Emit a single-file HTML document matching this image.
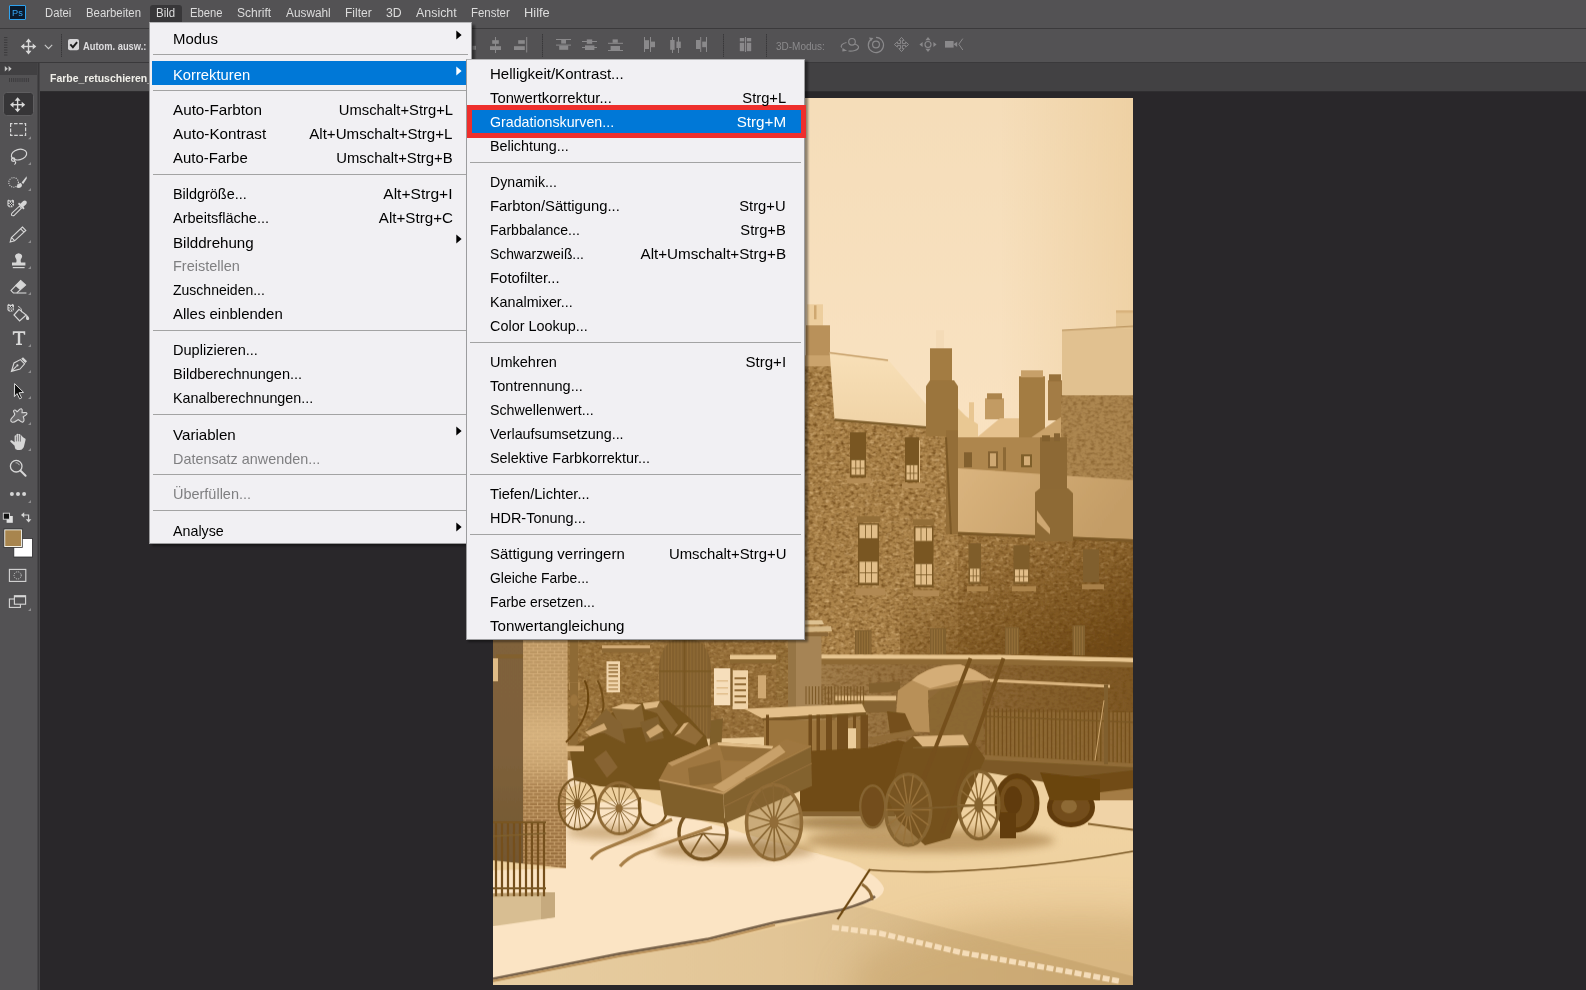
<!DOCTYPE html>
<html lang="de"><head><meta charset="utf-8"><title>Photoshop – Bild › Korrekturen › Gradationskurven</title>
<style>
html,body{margin:0;padding:0}
body{width:1586px;height:990px;position:relative;overflow:hidden;background:#29272a;font-family:"Liberation Sans",sans-serif;}
.abs{position:absolute}
.t{position:absolute;white-space:pre;line-height:24px;height:24px}
.sep{position:absolute;height:1px;background:#a3a3a3}
.menu{position:absolute;background:#f1f0f3;box-sizing:border-box}
</style></head>
<body>
<!-- canvas & photo -->
<svg class="abs" style="left:493px;top:97.7px" width="640" height="887" viewBox="493 97.7 640 887" preserveAspectRatio="none">
<defs>
<linearGradient id="sky" x1="0" y1="0" x2="0" y2="1"><stop offset="0" stop-color="#f5ddb9"/><stop offset="0.35" stop-color="#f9e2c1"/><stop offset="1" stop-color="#f4dbb6"/></linearGradient>
<linearGradient id="skyR" x1="0" y1="0" x2="1" y2="0"><stop offset="0" stop-color="#e9c792" stop-opacity="0"/><stop offset="1" stop-color="#e9c792" stop-opacity="0.55"/></linearGradient>
<linearGradient id="roof1" x1="0" y1="0" x2="0" y2="1"><stop offset="0" stop-color="rgb(248,224,184)"/><stop offset="1" stop-color="rgb(240,211,166)"/></linearGradient>
<linearGradient id="roof2" x1="0" y1="0" x2="1" y2="0.3"><stop offset="0" stop-color="#dab47e"/><stop offset="1" stop-color="#c49d66"/></linearGradient>
<linearGradient id="wdark" x1="0.2" y1="0.3" x2="0.8" y2="1"><stop offset="0" stop-color="rgb(100,62,12)" stop-opacity="0"/><stop offset="1" stop-color="rgb(100,62,12)" stop-opacity="0.8"/></linearGradient>
<linearGradient id="bwall" x1="0" y1="0" x2="1" y2="0"><stop offset="0" stop-color="rgb(162,126,76)"/><stop offset="0.5" stop-color="rgb(140,102,52)"/><stop offset="1" stop-color="rgb(126,88,36)"/></linearGradient>
<linearGradient id="door" x1="0" y1="0" x2="0" y2="1"><stop offset="0" stop-color="rgb(128,98,58)"/><stop offset="0.45" stop-color="rgb(126,97,59)"/><stop offset="1" stop-color="rgb(112,84,46)"/></linearGradient>
<linearGradient id="pillar" x1="0" y1="0" x2="0" y2="1"><stop offset="0" stop-color="rgb(186,148,96)"/><stop offset="0.4" stop-color="rgb(196,160,110)"/><stop offset="0.7" stop-color="rgb(162,120,70)"/><stop offset="1" stop-color="rgb(150,108,60)"/></linearGradient>
<linearGradient id="ground" x1="0" y1="0" x2="0" y2="1"><stop offset="0" stop-color="rgb(236,205,155)"/><stop offset="0.4" stop-color="rgb(240,211,162)"/><stop offset="1" stop-color="rgb(236,204,153)"/></linearGradient>
<linearGradient id="road" x1="0" y1="0" x2="1" y2="0"><stop offset="0" stop-color="rgb(232,206,162)"/><stop offset="0.45" stop-color="rgb(226,197,150)"/><stop offset="1" stop-color="rgb(206,173,120)"/></linearGradient>
<linearGradient id="pillarL" x1="0" y1="0" x2="0" y2="1"><stop offset="0" stop-color="#e1bd88" stop-opacity="0"/><stop offset="0.4" stop-color="#e1bd88" stop-opacity="0.55"/><stop offset="0.7" stop-color="#e1bd88" stop-opacity="0.4"/><stop offset="1" stop-color="#e1bd88" stop-opacity="0"/></linearGradient>
<pattern id="bricks" x="523" y="640" width="8.4" height="6.6" patternUnits="userSpaceOnUse"><path d="M0 0.4H8.4M0 3.7H8.4M2 0.4V3.7M6.2 3.7V6.6" stroke="#deb883" stroke-width="0.9" fill="none" opacity="0.75"/></pattern>
<filter id="g1" x="0" y="0" width="100%" height="100%" color-interpolation-filters="sRGB"><feTurbulence type="fractalNoise" baseFrequency="0.22 0.38" numOctaves="2" seed="4"/><feColorMatrix type="matrix" values="0 0 0 0 0.42  0 0 0 0 0.27  0 0 0 0 0.08  0 0 0 1.9 -0.8"/></filter>
<filter id="g2" x="0" y="0" width="100%" height="100%" color-interpolation-filters="sRGB"><feTurbulence type="fractalNoise" baseFrequency="0.2 0.34" numOctaves="2" seed="11"/><feColorMatrix type="matrix" values="0 0 0 0 0.88  0 0 0 0 0.74  0 0 0 0 0.53  0 0 0 1.9 -1.0"/></filter>
<clipPath id="cw"><polygon points="805,366 834,366 834,419 958,428 958,532 1133,540 1133,660 805,660"/></clipPath>
<filter id="b12" x="-30%" y="-60%" width="160%" height="220%"><feGaussianBlur stdDeviation="18"/></filter>
<filter id="b3" x="-20%" y="-50%" width="140%" height="200%"><feGaussianBlur stdDeviation="4"/></filter>
<filter id="soft" x="0" y="0" width="100%" height="100%"><feGaussianBlur stdDeviation="0.55"/></filter>
<clipPath id="pc"><rect x="493" y="97.7" width="640" height="887"/></clipPath>
</defs>
<g clip-path="url(#pc)"><g filter="url(#soft)">
<rect x="486" y="90" width="654" height="902" fill="url(#sky)" />
<rect x="1000" y="97.7" width="133" height="422.3" fill="url(#skyR)" />
<polygon points="1062,330 1133,326 1133,397 1062,397" fill="rgb(225,193,144)" />
<rect x="1116" y="311" width="17" height="18" fill="rgb(228,196,146)" />
<rect x="1116" y="310" width="17" height="2.5" fill="#d8b27c" />
<path d="M1062 330L1133 326" stroke="#b28a53" stroke-width="1" fill="none" />
<rect x="1019" y="376" width="26" height="61" fill="#a37b43" />
<rect x="1021" y="370" width="22" height="7" fill="#c7a069" />
<rect x="1048" y="380" width="14" height="40" fill="#a37b44" />
<rect x="1049" y="374" width="12" height="7" fill="#97713a" />
<rect x="985" y="398" width="19" height="21" fill="#c29b64" />
<rect x="987" y="393" width="15" height="6" fill="#ac844c" />
<rect x="969" y="402" width="5" height="19" fill="#e8c692" />
<polygon points="958,408 966,416 978,424 978,438 958,438" fill="#e9c893" />
<polygon points="976,438 1000,418 1019,418 1019,438" fill="#e5c18d" />
<polygon points="1030,438 1062,416 1062,438" fill="#c9a26b" />
<rect x="958" y="437" width="104" height="46" fill="#ae864e" />
<rect x="964" y="452" width="8" height="15" fill="#82602e" />
<rect x="988" y="451" width="10" height="17" fill="#866431" />
<rect x="990" y="453" width="6" height="13" fill="#cfa872" />
<rect x="1021" y="454" width="11" height="13" fill="#7f5e2c" />
<rect x="1024" y="456" width="6" height="9" fill="#d4ad77" />
<rect x="1003" y="447" width="3" height="23" fill="#8d6935" />
<rect x="1061" y="395" width="72" height="87" fill="rgb(172,134,80)" />
<g><rect x="1061" y="395" width="72" height="87" filter="url(#g1)" opacity="0.6"/></g>
<rect x="807" y="304" width="16" height="22" fill="#edce9e" />
<rect x="814" y="305" width="2.5" height="14" fill="#cfa871" />
<rect x="806" y="325" width="24" height="43" fill="#b9915a" />
<rect x="805" y="355" width="29" height="11" fill="#caa36c" />
<rect x="493" y="366" width="342" height="294" fill="rgb(172,132,75)" />
<rect x="834" y="419" width="124" height="241" fill="rgb(172,132,75)" />
<rect x="958" y="482" width="175" height="178" fill="rgb(158,118,62)" />
<g clip-path="url(#cw)"><rect x="805" y="366" width="328" height="294" filter="url(#g1)" opacity="1"/></g>
<g clip-path="url(#cw)"><rect x="805" y="366" width="328" height="294" filter="url(#g2)" opacity="1"/></g>
<rect x="900" y="520" width="233" height="140" fill="url(#wdark)" />
<polygon points="829.7,352 888,359.5 947,428.5 834.5,419" fill="url(#roof1)" />
<path d="M830 352.5L888 360" stroke="#c59e67" stroke-width="1.5" fill="none" />
<path d="M834.5 419.5L947 429" stroke="#7f5e2c" stroke-width="2.5" fill="none" />
<rect x="936" y="330" width="8" height="19" fill="#f4dbb7" />
<rect x="930" y="348" width="22" height="33" fill="#a37b43" />
<polygon points="926,386 930,380 954,380 958,386 958,436 926,436" fill="#9b743c" />
<rect x="946" y="430" width="12" height="104" fill="#946e38" />
<path d="M946 437L951 534" stroke="#7b5926" stroke-width="2" fill="none" />
<polygon points="958,468 1133,480 1133,539 1053,536 958,532" fill="url(#roof2)" />
<path d="M958 533L1133 540.5" stroke="#7b5926" stroke-width="3" fill="none" />
<rect x="1040" y="437" width="27" height="52" fill="#8d6934" />
<rect x="1042" y="435" width="8" height="6" fill="#82602e" />
<rect x="1054" y="433" width="6" height="8" fill="#866430" />
<polygon points="1035,492 1040,488 1068,488 1073,493 1073,541 1035,541" fill="#8e6a35" />
<polygon points="1037,510 1050,528 1050,534 1037,522" fill="#cea771" />
<rect x="850" y="432" width="16" height="45" fill="#795724" />
<rect x="851.5" y="459.9" width="13" height="14.6" fill="#e2be89" />
<rect x="855.4" y="459.9" width="0.8" height="14.6" fill="#795724" />
<rect x="859.8" y="459.9" width="0.8" height="14.6" fill="#795724" />
<rect x="851.5" y="467.6" width="13" height="0.8" fill="#795724" />
<rect x="905" y="437" width="14" height="45" fill="#795724" />
<rect x="906.5" y="464.9" width="11" height="14.6" fill="#e2be89" />
<rect x="909.8" y="464.9" width="0.8" height="14.6" fill="#795724" />
<rect x="913.4" y="464.9" width="0.8" height="14.6" fill="#795724" />
<rect x="906.5" y="472.6" width="11" height="0.8" fill="#795724" />
<rect x="847" y="478" width="24" height="5" fill="#b48c54" />
<rect x="902" y="483" width="23" height="5" fill="#b48c54" />
<path d="M919.5 440L919.5 482" stroke="#dfbb85" stroke-width="1" fill="none" />
<rect x="858" y="523" width="21" height="62" fill="#795724" />
<rect x="859.5" y="524.5" width="18" height="13.4" fill="#e2be89" />
<rect x="859.5" y="561.4" width="18" height="21.1" fill="#e2be89" />
<rect x="865.1" y="524.5" width="0.8" height="13.4" fill="#795724" />
<rect x="871.1" y="524.5" width="0.8" height="13.4" fill="#795724" />
<rect x="865.1" y="561.4" width="0.8" height="21.1" fill="#795724" />
<rect x="871.1" y="561.4" width="0.8" height="21.1" fill="#795724" />
<rect x="859.5" y="572" width="18" height="0.8" fill="#795724" />
<rect x="914" y="526" width="19.5" height="61" fill="#795724" />
<rect x="915.5" y="527.5" width="16.5" height="13.1" fill="#e2be89" />
<rect x="915.5" y="563.8" width="16.5" height="20.7" fill="#e2be89" />
<rect x="920.6" y="527.5" width="0.8" height="13.1" fill="#795724" />
<rect x="926.1" y="527.5" width="0.8" height="13.1" fill="#795724" />
<rect x="920.6" y="563.8" width="0.8" height="20.7" fill="#795724" />
<rect x="926.1" y="563.8" width="0.8" height="20.7" fill="#795724" />
<rect x="915.5" y="574.2" width="16.5" height="0.8" fill="#795724" />
<rect x="856" y="588" width="29" height="7" fill="#b18952" />
<rect x="913" y="590" width="26" height="6" fill="#b18952" />
<rect x="857" y="516" width="23" height="6" fill="#936e38" />
<rect x="913" y="519" width="21" height="6" fill="#936e38" />
<rect x="968.5" y="543" width="12.5" height="41" fill="#7f5d2b" />
<rect x="970" y="568.4" width="9.5" height="13.1" fill="#e2be89" />
<rect x="972.8" y="568.4" width="0.8" height="13.1" fill="#7f5d2b" />
<rect x="975.9" y="568.4" width="0.8" height="13.1" fill="#7f5d2b" />
<rect x="970" y="575.4" width="9.5" height="0.8" fill="#7f5d2b" />
<rect x="1013.5" y="545" width="16" height="39" fill="#7f5d2b" />
<rect x="1015" y="569.2" width="13" height="12.3" fill="#e2be89" />
<rect x="1018.9" y="569.2" width="0.8" height="12.3" fill="#7f5d2b" />
<rect x="1023.3" y="569.2" width="0.8" height="12.3" fill="#7f5d2b" />
<rect x="1015" y="575.8" width="13" height="0.8" fill="#7f5d2b" />
<rect x="1083" y="549" width="16" height="33" fill="#805f2d" />
<rect x="967" y="586" width="21" height="5" fill="#ac844c" />
<rect x="1012" y="586" width="24" height="5" fill="#ac844c" />
<rect x="1082" y="584" width="22" height="5" fill="#a88048" />
<rect x="855" y="630" width="16.5" height="24" fill="#81602e" />
<path d="M857 631V654M859.6 631V654M862.2 631V654M864.8 631V654M867.4 631V654M870 631V654" fill="none" stroke="#a07840" stroke-width="0.7" />
<rect x="930" y="628" width="16" height="26" fill="#81602e" />
<path d="M932 629V654M934.6 629V654M937.2 629V654M939.8 629V654M942.4 629V654" fill="none" stroke="#a07840" stroke-width="0.7" />
<rect x="1005" y="627" width="14" height="27" fill="#81602e" />
<path d="M1007 628V654M1009.6 628V654M1012.2 628V654M1014.8 628V654M1017.4 628V654" fill="none" stroke="#a07840" stroke-width="0.7" />
<rect x="1072.5" y="625" width="12.5" height="30" fill="#81602e" />
<path d="M1074.5 626V655M1077.1 626V655M1079.7 626V655M1082.3 626V655" fill="none" stroke="#a07840" stroke-width="0.7" />
<polygon points="821,658 1133,661 1133,770 821,770" fill="url(#bwall)" />
<g><rect x="821" y="660" width="312" height="110" filter="url(#g1)" opacity="0.7"/></g>
<polygon points="821,654.3 1000,654.6 1133,657.6 1133,662 1000,659 821,658.6" fill="#e7c590" />
<polygon points="821,658.6 1000,659 1133,662 1133,667 1000,664.5 821,664" fill="#8f6b36" />
<polygon points="990,678.5 1110,684.5 1110,687.5 990,681.5" fill="#dab47e" />
<rect x="985" y="712" width="148" height="53" fill="#906b36" opacity="0.75"/>
<path d="M986 708V766M990.1 708.1V766M994.2 708.2V766M998.3 708.2V766M1002.4 708.3V766M1006.5 708.4V766M1010.6 708.5V766M1014.7 708.6V766M1018.8 708.7V766M1022.9 708.7V766M1027 708.8V766M1031.1 708.9V766M1035.2 709V766M1039.3 709.1V766M1043.4 709.1V766M1047.5 709.2V766M1051.6 709.3V766M1055.7 709.4V766M1059.8 709.5V766M1063.9 709.6V766M1068 709.6V766M1072.1 709.7V766M1076.2 709.8V766M1080.3 709.9V766M1084.4 710V766M1088.5 710V766M1092.6 710.1V766M1096.7 710.2V766M1100.8 710.3V766M1104.9 710.4V766M1109 710.5V766M1113.1 710.5V766M1117.2 710.6V766M1121.3 710.7V766M1125.4 710.8V766M1129.5 710.9V766" fill="none" stroke="#74501c" stroke-width="1.3" />
<path d="M985 716L1133 722" stroke="#7a5724" stroke-width="1.4" fill="none" />
<rect x="567" y="640" width="93" height="120" fill="#9b743c" />
<rect x="660" y="640" width="161" height="120" fill="#98713b" />
<rect x="776" y="645" width="24" height="55" fill="#946f38" />
<g><rect x="567" y="640" width="254" height="120" filter="url(#g1)" opacity="0.7"/></g>
<g><rect x="567" y="640" width="254" height="120" filter="url(#g2)" opacity="0.7"/></g>
<rect x="493" y="640" width="31" height="254" fill="url(#door)" />
<rect x="493" y="658" width="5" height="23" fill="#e0bc86" />
<rect x="496" y="654" width="35" height="4" fill="#82602e" />
<rect x="523" y="640" width="44.5" height="230" fill="url(#pillar)" />
<rect x="523" y="640" width="44.5" height="230" fill="url(#bricks)" />
<rect x="523" y="700" width="44.5" height="90" fill="url(#pillarL)" />
<rect x="570" y="640" width="8" height="95" fill="#8e6a35" />
<rect x="569" y="682" width="11" height="8" fill="#b08850" />
<rect x="788" y="633" width="33.5" height="132" fill="rgb(166,132,84)" />
<rect x="788" y="640" width="8" height="125" fill="rgb(150,116,68)" />
<polygon points="800,620 822,620 824,624 800,624.5" fill="rgb(222,194,146)" />
<polygon points="800,626.5 831,626 832,631 800,632" fill="rgb(214,184,134)" />
<rect x="800" y="632" width="28" height="4" fill="rgb(140,104,56)" />
<rect x="606.5" y="661" width="13.5" height="31" fill="#f1d6ad" />
<rect x="608.5" y="664" width="9.5" height="1.6" fill="#936d38" />
<rect x="608.5" y="667.5" width="9.5" height="1.6" fill="#936d38" />
<rect x="608.5" y="671" width="9.5" height="1.6" fill="#936d38" />
<rect x="608.5" y="675" width="9.5" height="1.6" fill="#936d38" />
<rect x="608.5" y="680" width="9.5" height="1.6" fill="#b89059" />
<rect x="608.5" y="684" width="9.5" height="1.6" fill="#b89059" />
<rect x="608.5" y="688" width="9.5" height="1.6" fill="#b89059" />
<path d="M659 760V668Q660 640 684 636Q710 640 711 668V760Z" fill="#83612f" />
<path d="M662 640V740M665.2 640V740M668.4 640V740M671.6 640V740M674.8 640V740M678 640V740M681.2 640V740M684.4 640V740M687.6 640V740M690.8 640V740M694 640V740M697.2 640V740M700.4 640V740M703.6 640V740M706.8 640V740" fill="none" stroke="#946f39" stroke-width="0.8" />
<path d="M659 671L711 671" stroke="#7a5824" stroke-width="1.4" fill="none" />
<path d="M659 706L711 706" stroke="#7a5824" stroke-width="1.4" fill="none" />
<path d="M684.5 640L684.5 740" stroke="#795622" stroke-width="1.6" fill="none" />
<rect x="714" y="668" width="16.5" height="37" fill="#f6debb" />
<rect x="732.5" y="670" width="15.5" height="39" fill="#f0d3a7" />
<rect x="734.5" y="677" width="11.5" height="2" fill="#936d38" />
<rect x="734.5" y="683" width="11.5" height="2" fill="#936d38" />
<rect x="734.5" y="689" width="11.5" height="2" fill="#936d38" />
<rect x="734.5" y="695" width="11.5" height="2" fill="#936d38" />
<rect x="734.5" y="701" width="11.5" height="2" fill="#936d38" />
<rect x="716.5" y="680" width="11.5" height="1.2" fill="#dcb680" />
<rect x="716.5" y="687" width="11.5" height="1.2" fill="#dcb680" />
<rect x="716.5" y="693" width="11.5" height="1.2" fill="#dcb680" />
<rect x="730.5" y="668" width="2" height="38" fill="#82602e" />
<rect x="758" y="675" width="8" height="23" fill="#cfa872" />
<polygon points="730,654.5 776,654.5 776,659 730,659" fill="#e8c691" />
<rect x="730" y="659" width="46" height="4.5" fill="#8b6733" />
<rect x="602" y="645" width="48" height="3" fill="#d1aa74" />
<rect x="602" y="648" width="48" height="4.5" fill="#8d6934" />
<polygon points="493,860 566,868 566,790 660,740 821,735 821,770 1133,770 1133,985 493,985" fill="url(#ground)" />
<path d="M493 870L566 868L566 806L640 798L700 820L760 838L850 862Q880 876 884 888Q884 898 862 904L790 920L700 939L620 953L493 978Z" fill="rgb(251,228,196)" />
<path d="M493 978.5L620 953.5L707 939L775 922L840 910Q868 902 875 896" fill="none" stroke="rgb(120,98,74)" stroke-width="2.8" />
<path d="M493 981L620 956L707 941.5L775 924.5" fill="none" stroke="#bf9760" stroke-width="2.5" />
<path d="M493 982L620 957L707 942.5L790 924L862 906L1133 976V985H493Z" fill="url(#road)" />
<ellipse cx="1080" cy="985" rx="230" ry="70" fill="rgb(196,160,104)" opacity="0.5" filter="url(#b12)"/>
<path d="M832 927L880 933L960 952L1050 968L1120 981" fill="none" stroke="#f9e2c1" stroke-width="5.5" stroke-dasharray="7 2.5" opacity="0.9"/>
<polygon points="1095,800 1133,795 1133,828 1090,823" fill="#f0d3a7" />
<path d="M1088 823.5L1133 829.5" stroke="#886531" stroke-width="2" fill="none" />
<rect x="1095" y="784" width="38" height="16" fill="#a47c44" />
<ellipse cx="735" cy="850" rx="80" ry="9" fill="#a57d45" opacity="0.6" filter="url(#b3)"/>
<ellipse cx="930" cy="840" rx="125" ry="12" fill="#a07840" opacity="0.6" filter="url(#b3)"/>
<ellipse cx="610" cy="832" rx="45" ry="7" fill="#ac844c" opacity="0.55" filter="url(#b3)"/>
<ellipse cx="850" cy="822" rx="60" ry="8" fill="#8f6b36" opacity="0.7" filter="url(#b3)"/>
<path d="M869.5 869.5Q900 872 940 871.5Q1040 868 1133 851" fill="none" stroke="#7a5825" stroke-width="1.6" />
<path d="M837.5 919L870 869" stroke="#6d4711" stroke-width="2.2" fill="none" />
<path d="M862 884Q872 890 872 900" fill="none" stroke="#8f6a35" stroke-width="3" />
<polygon points="974,754 1133,763 1133,778 1070,786 974,770" fill="#7b5926" />
<polygon points="974,754 1133,763 1133,767 974,759" fill="#916c37" />
<polygon points="1070,777 1133,770 1133,788 1092,793 1070,790" fill="#714c17" />
<rect x="1104" y="684" width="4" height="80" fill="#805f2d" />
<path d="M1095 760L1104 700" stroke="#cda66f" stroke-width="1" fill="none" />
<ellipse cx="1017" cy="802.7" rx="20" ry="27" fill="#74501c" stroke="#623c09" stroke-width="5" />
<ellipse cx="1013" cy="800" rx="9" ry="14" fill="#603a08" />
<ellipse cx="1071" cy="807" rx="21.5" ry="17.5" fill="#734e1a" stroke="#613b09" stroke-width="5" />
<ellipse cx="1069" cy="806" rx="8" ry="7" fill="#8e6a35" />
<rect x="1000" y="812" width="16" height="26" fill="#623c09" />
<polygon points="1040,772 1100,779 1100,800 1050,800" fill="#6b4510" />
<polygon points="869,683 900,681 900,691 869,693" fill="#82602e" />
<rect x="835" y="695.5" width="61" height="5" fill="#e1bd88" />
<rect x="835" y="700.5" width="61" height="11.5" fill="#866430" />
<path d="M806 686V704M809.2 686V704M812.4 686V704M815.6 686V704M818.8 686V704M822 686V704M825.2 686V704M828.4 686V704M831.6 686V704M834.8 686V704M838 686V704M841.2 686V704M844.4 686V704M847.6 686V704M850.8 686V704M854 686V704M857.2 686V704M860.4 686V704M863.6 686V704" fill="none" stroke="#7a5724" stroke-width="1" />
<path d="M895 731L898 690L912 680Q925 668 945 665L960 664L975 670L992 680L965 683L940 690L928 700L930 732Z" fill="#b89059" />
<path d="M912 680Q925 668 945 665L960 664L975 670L992 680L960 680L930 688Z" fill="#d4ad77" />
<polygon points="928,690 982,682 984,740 930,740" fill="#8b6733" opacity="0.9"/>
<polygon points="744,708.5 862,703.5 866,712 762,718" fill="#e4c08b" />
<polygon points="762,718 866,712 866,715.5 764,721.5" fill="#7a5825" />
<rect x="764" y="720" width="102" height="32" fill="#9c753d" />
<rect x="766" y="714.5" width="3" height="39.5" fill="#734e1a" />
<rect x="808.5" y="714.5" width="3.5" height="39.5" fill="#734e1a" />
<rect x="816.5" y="714.5" width="3.5" height="39.5" fill="#734e1a" />
<rect x="826" y="714.5" width="6" height="39.5" fill="#734e1a" />
<rect x="837" y="714.5" width="11" height="39.5" fill="#734e1a" />
<rect x="853" y="714.5" width="3" height="39.5" fill="#734e1a" />
<rect x="860.5" y="714.5" width="7.5" height="39.5" fill="#734e1a" />
<rect x="848" y="728" width="8" height="20" fill="#eccd9b" />
<polygon points="887,711 905,713 913,731 890,733" fill="#74501c" />
<polygon points="868,738 913,729 916,734 870,744" fill="#916c37" />
<path d="M800 751L868 748L898 740L915 744L915 790L897 814L800 816Z" fill="#704b16" />
<rect x="800" y="811" width="95" height="5" fill="#866431" />
<ellipse cx="872.7" cy="806.3" rx="12.5" ry="21" fill="#734e1a" stroke="#866431" stroke-width="2.4" />
<polygon points="903,744 913,736 975,744 985,758 950,838 925,845 898,820 888,800" fill="#75511d" />
<polygon points="913,736 963.2,734.4 968.8,745 922.8,746.5" fill="#dcb680" />
<path d="M913 747.5L969 746" stroke="#7f5e2c" stroke-width="1.5" fill="none" />
<path d="M970.5 658L915 800" stroke="#74501c" stroke-width="3.8" fill="none" />
<path d="M1003.5 658L942 832" stroke="#74501c" stroke-width="3.8" fill="none" />
<ellipse cx="908.2" cy="809.5" rx="21" ry="34" fill="#7a5724" opacity="0.55"/>
<ellipse cx="908.2" cy="809.5" rx="22.5" ry="35.5" fill="none" stroke="#876531" stroke-width="3.6" />
<path d="M908.2 809.5L930.7 809.5M908.2 809.5L928.5 824.9M908.2 809.5L922.2 837.3M908.2 809.5L913.2 844.1M908.2 809.5L903.2 844.1M908.2 809.5L894.2 837.3M908.2 809.5L887.9 824.9M908.2 809.5L885.7 809.5M908.2 809.5L887.9 794.1M908.2 809.5L894.2 781.7M908.2 809.5L903.2 774.9M908.2 809.5L913.2 774.9M908.2 809.5L922.2 781.7M908.2 809.5L928.5 794.1" fill="none" stroke="#98723b" stroke-width="1.5" />
<ellipse cx="908.2" cy="809.5" rx="4.5" ry="7.1" fill="#876531" />
<ellipse cx="978.8" cy="804.8" rx="20" ry="33.8" fill="none" stroke="#84622f" stroke-width="3.4" />
<path d="M978.8 804.8L998.8 804.8M978.8 804.8L996.8 819.5M978.8 804.8L991.3 831.2M978.8 804.8L983.3 837.8M978.8 804.8L974.3 837.8M978.8 804.8L966.3 831.2M978.8 804.8L960.8 819.5M978.8 804.8L958.8 804.8M978.8 804.8L960.8 790.1M978.8 804.8L966.3 778.4M978.8 804.8L974.3 771.8M978.8 804.8L983.3 771.8M978.8 804.8L991.3 778.4M978.8 804.8L996.8 790.1" fill="none" stroke="#8e6a35" stroke-width="1.4" />
<ellipse cx="978.8" cy="804.8" rx="4.5" ry="7.6" fill="#84622f" />
<path d="M913 808.7L975 805.3" stroke="#7f5e2c" stroke-width="1.8" fill="none" />
<rect x="570" y="682" width="8" height="78" fill="#8e6a35" />
<ellipse cx="574" cy="700" rx="4" ry="6" fill="#9c743d" />
<path d="M566 742Q586 722 588 702Q589 688 584.5 680" fill="none" stroke="#6b4510" stroke-width="2" />
<path d="M590 742Q606 712 603 700Q602 688 597.5 680" fill="none" stroke="#724e19" stroke-width="2" />
<path d="M570 749L590 736L606 716L622 706L645 702L668 700L690 718L706 736L710 752L735 756L750 770L735 786L660 790L600 786L574 780Z" fill="#75521e" />
<rect x="566.5" y="745.5" width="17.5" height="5.5" fill="#dab47e" />
<polygon points="611.2,708 641.4,704 645.3,726.5 621.7,729" fill="#876531" />
<polygon points="611,708 623,703.5 641.4,704 633.5,709.4" fill="#e1bc87" />
<polygon points="642.7,702.8 659.8,700.8 678,725 671.6,734.3 657,713 644,709" fill="#896632" />
<polygon points="642.7,702.8 659.8,700.8 657,707 645,709" fill="#deb983" />
<polygon points="585,731.7 606,708 621.7,723.8 625.6,743.5 604.6,733" fill="#856330" />
<polygon points="585,731.7 604,723 607,729 590,736" fill="#d1aa74" />
<polygon points="674.2,735.6 688.7,721.9 703.1,735.6 695.2,744.8" fill="#916c37" />
<polygon points="674.2,735.6 684,723 688.7,721.9 680,733" fill="#d8b27c" />
<polygon points="594,759 606,750 617.8,767 607,777.6" fill="#876431" />
<polygon points="640,722 658,716 664,738 646,742" fill="#805f2d" />
<polygon points="646,732 658,724 664,730 650,738" fill="#cca56e" />
<ellipse cx="577.4" cy="803.6" rx="18.7" ry="25.5" fill="none" stroke="#7a5724" stroke-width="2.2" />
<path d="M577.4 803.6L596.1 803.6M577.4 803.6L595 812.3M577.4 803.6L591.7 820M577.4 803.6L586.8 825.7M577.4 803.6L580.6 828.7M577.4 803.6L574.2 828.7M577.4 803.6L568 825.7M577.4 803.6L563.1 820M577.4 803.6L559.8 812.3M577.4 803.6L558.7 803.6M577.4 803.6L559.8 794.9M577.4 803.6L563.1 787.2M577.4 803.6L568 781.5M577.4 803.6L574.2 778.5M577.4 803.6L580.6 778.5M577.4 803.6L586.8 781.5M577.4 803.6L591.7 787.2M577.4 803.6L595 794.9" fill="none" stroke="#7b5926" stroke-width="1" />
<ellipse cx="577.4" cy="803.6" rx="3.5" ry="4.8" fill="#7a5724" />
<ellipse cx="619.1" cy="808.1" rx="21" ry="25.5" fill="none" stroke="#906b36" stroke-width="3" />
<path d="M619.1 808.1L640.1 808.1M619.1 808.1L638.5 817.9M619.1 808.1L633.9 826.1M619.1 808.1L627.1 831.7M619.1 808.1L619.1 833.6M619.1 808.1L611.1 831.7M619.1 808.1L604.3 826.1M619.1 808.1L599.7 817.9M619.1 808.1L598.1 808.1M619.1 808.1L599.7 798.3M619.1 808.1L604.3 790.1M619.1 808.1L611.1 784.5M619.1 808.1L619.1 782.6M619.1 808.1L627.1 784.5M619.1 808.1L633.9 790.1M619.1 808.1L638.5 798.3" fill="none" stroke="#866431" stroke-width="1" />
<ellipse cx="619.1" cy="808.1" rx="3.5" ry="4.2" fill="#906b36" />
<path d="M640 797A14 20 0 0 0 667 812" fill="none" stroke="#75511d" stroke-width="2.4" />
<ellipse cx="703" cy="833" rx="24" ry="26" fill="none" stroke="#785421" stroke-width="3.4" />
<path d="M703 833L690 855M703 833L720 852M703 833L680 840M703 833L727 835" fill="none" stroke="#7a5724" stroke-width="1.6" />
<polygon points="711,720 723,718 721,752 709,756" fill="#7f5e2c" />
<polygon points="658.8,779.7 668,762.7 708,745.8 717.6,742 773.3,745.8 786,738 811,745.8 745.5,778.5 723.6,793" fill="#9f773f" />
<polygon points="667.9,762.7 707.9,745.8 712,748 672,766" fill="#bd955e" />
<polygon points="720,746 772,748 770,761.5 724,760" fill="#946e38" />
<polygon points="717.6,742 773.3,745.8 772,748.5 718,745" fill="#e1bd88" />
<polygon points="688,768 720,760 722,782 690,786" fill="#8f6a35" />
<polygon points="712.7,787 779.4,744.5 785.5,751.8 744.2,779.7 723.6,791.8" fill="#c8a16a" />
<polygon points="658.8,779.7 723.6,793 724.2,823.3 664.2,814.8" fill="#805e2c" />
<polygon points="723.6,793 745.5,778.5 811,745.8 812,785.8 724.8,823.3" fill="#83622f" />
<path d="M658.8 779.7L723.6 793" stroke="#c09861" stroke-width="1.8" fill="none" />
<path d="M723.6 793L745.5 778.5" stroke="#c09861" stroke-width="1.6" fill="none" />
<path d="M745.5 778.5L811 745.8" stroke="#a47c44" stroke-width="1.6" fill="none" />
<path d="M724.5 806L812 763" stroke="#98713b" stroke-width="1" fill="none" />
<path d="M672 819L640 834L606 848Q596 852 591 859" fill="none" stroke="#a47c44" stroke-width="3.2" />
<path d="M712 827L660 845L640 852Q628 857 620 866" fill="none" stroke="#a88049" stroke-width="3.2" />
<ellipse cx="774" cy="822" rx="26" ry="36" fill="#866431" opacity="0.35"/>
<ellipse cx="774" cy="822" rx="27.5" ry="37.5" fill="none" stroke="#916c37" stroke-width="3.6" />
<path d="M774 822L801 829.5M774 822L795.9 844.7M774 822L786.5 855.4M774 822L774.7 859.5M774 822L762.7 856.2M774 822L752.9 846.1M774 822L747.3 831.2M774 822L747 814.5M774 822L752.1 799.3M774 822L761.5 788.6M774 822L773.3 784.5M774 822L785.3 787.8M774 822L795.1 797.9M774 822L800.7 812.8" fill="none" stroke="#896632" stroke-width="1.6" />
<ellipse cx="774" cy="822" rx="4.5" ry="6.1" fill="#916c37" />
<polygon points="493,893 555,892 555,917 493,926" fill="rgb(216,190,146)" />
<polygon points="493,893 555,892 555,895 493,896.5" fill="rgb(190,160,112)" />
<polygon points="541,892.5 555,892 555,917 541,919" fill="rgb(198,170,126)" />
<path d="M496 822V896M502 822V896M508 822V896M514 822V896M520 822V896M526 822V896M532 822V896M538 822V896M544 822V896" fill="none" stroke="#74501c" stroke-width="2.2" />
<path d="M493 822L546 822" stroke="#7a5724" stroke-width="2" fill="none" />
<path d="M493 836L546 833" stroke="#805f2d" stroke-width="1.6" fill="none" />
<path d="M493 888L546 888" stroke="#7a5724" stroke-width="2" fill="none" />
</g></g>
</svg>
<!-- application chrome -->
<div class="abs" style="left:0;top:0;width:1586px;height:28px;background:#535254"></div>
<div class="abs" style="left:0;top:28px;width:1586px;height:1px;background:#3b3a3c"></div>
<div class="abs" style="left:0;top:29px;width:1586px;height:33px;background:#535254"></div>
<div class="abs" style="left:0;top:62px;width:1586px;height:1px;background:#3a393b"></div>
<div class="abs" style="left:40px;top:63px;width:1546px;height:28px;background:#424143"></div>
<div class="abs" style="left:40px;top:63px;width:440px;height:28px;background:#535254"></div>
<div class="abs" style="left:40px;top:91px;width:1546px;height:1px;background:#2f2e30"></div>
<!-- Ps logo -->
<div class="abs" style="left:8.5px;top:4.8px;width:17px;height:15px;box-sizing:border-box;border:1.3px solid #2fa3f0;background:#0a1a2c;border-radius:1px"></div>
<!-- options bar -->
<svg class="abs" style="left:0;top:29px" width="1000" height="33" viewBox="0 29 1000 33">
 <g stroke="#3c3b3d" stroke-width="1">
  <path d="M4 37.5h3.4M4 40h3.4M4 42.5h3.4M4 45h3.4M4 47.5h3.4M4 50h3.4M4 52.5h3.4M4 55h3.4"/>
 </g>
 <g stroke="#39383a" stroke-width="1" stroke-dasharray="1.6 0.6">
  <path d="M61.5 34v23M542.5 34v23M723.5 34v23M766.5 34v23"/>
 </g>
 <!-- move tool -->
 <g fill="#d8d8d8" stroke="none">
  <rect x="27.8" y="41" width="1.4" height="11"/>
  <rect x="23" y="45.8" width="11" height="1.4"/>
  <path d="M28.5 38.6l3 3.6h-6zM28.5 54.4l3-3.6h-6zM20.7 46.5l3.6-3v6zM36.3 46.5l-3.6-3v6z"/>
 </g>
 <path d="M44.8 44.8l3.7 3.9l3.7-3.9" fill="none" stroke="#c9c9c9" stroke-width="1.1"/>
 <!-- checkbox -->
 <rect x="68" y="39" width="11" height="11.2" rx="2" fill="#d6d5d7"/>
 <path d="M70.3 44.4l2.6 2.8l4.2-5" fill="none" stroke="#1d1d1d" stroke-width="1.9"/>
 <!-- align icons (disabled) -->
 <g fill="#8a898b" stroke="none">
  <rect x="472.5" y="45.8" width="3.5" height="4"/>
  <rect x="495" y="37" width="1" height="16"/><rect x="492.2" y="40.2" width="6.6" height="3.6"/><rect x="490" y="46.2" width="11" height="3.8"/>
  <rect x="526.2" y="37" width="1" height="15.5"/><rect x="518.2" y="40.2" width="6.6" height="3.6"/><rect x="514" y="46.2" width="10.8" height="3.8"/>
  <rect x="556" y="39" width="15" height="1"/><rect x="556" y="44.6" width="15" height="1"/><rect x="561.2" y="40" width="4.8" height="3.6"/><rect x="559.2" y="45.6" width="9" height="4.2"/>
  <rect x="582" y="41" width="15" height="1"/><rect x="582" y="47" width="15" height="1"/><rect x="586.8" y="39.4" width="5.4" height="4.4"/><rect x="585" y="45.4" width="9.4" height="4.6"/>
  <rect x="608" y="42.8" width="15" height="1"/><rect x="608" y="50" width="15" height="1"/><rect x="612.6" y="39.4" width="5.2" height="3.4"/><rect x="610.6" y="46" width="9.4" height="4"/>
  <rect x="644" y="37" width="1" height="15"/><rect x="650" y="37" width="1" height="15"/><rect x="645" y="40.2" width="4" height="8.8"/><rect x="651" y="41.6" width="4" height="5.6"/>
  <rect x="672" y="37" width="1" height="16"/><rect x="678" y="37" width="1" height="16"/><rect x="670.2" y="40" width="4.4" height="9.8"/><rect x="676.4" y="41.6" width="4.4" height="6.4"/>
  <rect x="700.2" y="37" width="1" height="15"/><rect x="706" y="37" width="1" height="15"/><rect x="696" y="40" width="4.2" height="9"/><rect x="702.2" y="41.6" width="3.8" height="5.6"/>
  <rect x="745" y="37" width="1" height="15"/><rect x="739.8" y="38" width="4.4" height="3.4"/><rect x="746.8" y="38" width="4.4" height="3.4"/><rect x="739.8" y="42.8" width="4.4" height="8.4"/><rect x="746.8" y="42.8" width="4.4" height="8.4"/>
 </g>
 <!-- 3D mode icons -->
 <g fill="none" stroke="#8a898b" stroke-width="1.2">
  <circle cx="852" cy="41.8" r="3.3"/>
  <path d="M846.5 42.5c-4 0.8-6.5 3-4.8 5.2M848.5 51c4 0.6 9.5-0.8 10-3.4c0.3-1.6-1.6-2.8-3.4-3.4"/>
  <path d="M842.5 48l4.6 2.8l-4.8 0.6z" fill="#8a898b" stroke="none"/>
  <circle cx="876" cy="44.5" r="3.4"/>
  <path d="M871 39.2a7.6 7.6 0 1 0 5-1.8"/>
  <path d="M869 37.5l4.4 0.6l-2.6 3.4z" fill="#8a898b" stroke="none"/>
  <path d="M901.5 37.4l2.6 3h-1.7v3.2h3.2v-1.7l3 2.6l-3 2.6v-1.7h-3.2v3.2h1.7l-2.6 3l-2.6-3h1.7v-3.2h-3.2v1.7l-3-2.6l3-2.6v1.7h3.2v-3.2h-1.7z" stroke-width="1"/>
  <circle cx="928" cy="44.5" r="3"/>
  <path d="M928 37l2.6 3.2h-5.2zM928 52l2.6-3.2h-5.2zM919.4 44.5l3.2-2.6v5.2zM936.6 44.5l-3.2-2.6v5.2z" fill="#8a898b" stroke="none"/>
  <rect x="945" y="41" width="8.6" height="6.6" fill="#8a898b" stroke="none"/>
  <path d="M953.6 44.3l3.6-2.6v5.4z" fill="#8a898b" stroke="none"/>
  <path d="M962.8 38.6l-4 5.6l4 5.8" stroke-width="1"/>
 </g>
</svg>
<div class="t" style="left:12.1px;top:1.1px;font-size:9.6px;color:#35a6f5;transform-origin:0 0;transform:scaleX(0.96)">Ps</div>
<div class="t" style="left:82.6px;top:34.5px;font-size:10.2px;font-weight:700;color:#dedddf;transform-origin:0 0;transform:scaleX(0.916)">Autom. ausw.:</div>
<div class="t" style="left:776.4px;top:34.5px;font-size:10.2px;color:#8b8a8c;transform-origin:0 0;transform:scaleX(0.98)">3D-Modus:</div>
<div class="t" style="left:50.4px;top:66px;font-size:11px;font-weight:700;color:#f0efe9;transform-origin:0 0;transform:scaleX(0.952)">Farbe_retuschieren_</div>

<div id="topmenu">
<div class="abs" style="left:150px;top:5px;width:32px;height:18px;background:#383739;border-radius:3px 3px 0 0"></div>
<div class="t" style="left:44.80px;transform-origin:0 0;top:0.64px;font-size:12px;color:#dcdcdc;font-weight:400;transform:scaleX(0.9388);">Datei</div>
<div class="t" style="left:85.80px;transform-origin:0 0;top:0.64px;font-size:12px;color:#dcdcdc;font-weight:400;transform:scaleX(0.9475);">Bearbeiten</div>
<div class="t" style="left:155.80px;transform-origin:0 0;top:0.64px;font-size:12px;color:#dcdcdc;font-weight:400;transform:scaleX(0.9543);">Bild</div>
<div class="t" style="left:189.80px;transform-origin:0 0;top:0.64px;font-size:12px;color:#dcdcdc;font-weight:400;transform:scaleX(0.9365);">Ebene</div>
<div class="t" style="left:236.60px;transform-origin:0 0;top:0.64px;font-size:12px;color:#dcdcdc;font-weight:400;transform:scaleX(1.0054);">Schrift</div>
<div class="t" style="left:285.60px;transform-origin:0 0;top:0.64px;font-size:12px;color:#dcdcdc;font-weight:400;transform:scaleX(0.9855);">Auswahl</div>
<div class="t" style="left:344.60px;transform-origin:0 0;top:0.64px;font-size:12px;color:#dcdcdc;font-weight:400;transform:scaleX(1.0011);">Filter</div>
<div class="t" style="left:385.60px;transform-origin:0 0;top:0.64px;font-size:12px;color:#dcdcdc;font-weight:400;transform:scaleX(1.0232);">3D</div>
<div class="t" style="left:415.60px;transform-origin:0 0;top:0.64px;font-size:12px;color:#dcdcdc;font-weight:400;transform:scaleX(1.0341);">Ansicht</div>
<div class="t" style="left:470.50px;transform-origin:0 0;top:0.64px;font-size:12px;color:#dcdcdc;font-weight:400;transform:scaleX(0.9536);">Fenster</div>
<div class="t" style="left:523.60px;transform-origin:0 0;top:0.64px;font-size:12px;color:#dcdcdc;font-weight:400;transform:scaleX(1.0701);">Hilfe</div>
</div>
<!-- left toolbar -->
<div class="abs" style="left:0;top:63px;width:37px;height:927px;background:#535254"></div>
<div class="abs" style="left:37px;top:63px;width:3px;height:927px;background:#454446"></div>
<div class="abs" style="left:38.4px;top:63px;width:1px;height:927px;background:#39383a"></div>
<div class="abs" style="left:0;top:63px;width:37px;height:11.5px;background:#414042"></div>
<div class="abs" style="left:2.8px;top:91.6px;width:31.2px;height:24.6px;box-sizing:border-box;background:#363537;border:1px solid #5f5e60;border-radius:3.5px"></div>
<svg class="abs" style="left:0;top:63px" width="40" height="560" viewBox="0 63 40 560">
 <g fill="#c6c6c6"><path d="M4.8 66l3 2.7l-3 2.7zM8.6 66l3 2.7l-3 2.7z"/></g>
 <g stroke="#3c3b3d" stroke-width="1"><path d="M9.5 78v4M11.6 78v4M13.7 78v4M15.8 78v4M17.9 78v4M20 78v4M22.1 78v4M24.2 78v4M26.3 78v4M28.4 78v4"/></g>
 <g fill="#8d8c8e">
  <path d="M31 136.2v3h-3zM31 162v3h-3zM31 188v3h-3zM31 240v3h-3zM31 266v3h-3zM31 292v3h-3zM31 344v3h-3zM31 370v3h-3zM31 396v3h-3zM31 422v3h-3zM31 448v3h-3zM31 500v3h-3zM31 608v3h-3z"/>
 </g>
 <!-- move -->
 <g fill="#dadada">
  <rect x="16.9" y="99.5" width="1.4" height="10.4"/><rect x="12.4" y="104" width="10.4" height="1.4"/>
  <path d="M17.6 97.2l3 3.5h-6zM17.6 112.2l3-3.5h-6zM10 104.7l3.5-3v6zM25.2 104.7l-3.5-3v6z"/>
 </g>
 <g fill="none" stroke="#d6d6d6" stroke-width="1.2">
  <!-- marquee -->
  <rect x="10.6" y="123.6" width="15" height="11.8" stroke-dasharray="3.6 1.6" stroke-dashoffset="1.8"/>
  <!-- lasso -->
  <ellipse cx="19" cy="154.6" rx="7.8" ry="5.2" transform="rotate(-14 19 154.6)"/>
  <circle cx="13.2" cy="159.6" r="1.7"/><path d="M14.4 161c1.6 0.8 1.8 2.4 0 3.4"/>
  <!-- quick select -->
  <circle cx="13.6" cy="182.4" r="4.8" stroke-dasharray="1 1.2" stroke-width="1.1"/>
  <path d="M16.6 187.6c0.4-2.6 1.8-4.2 4.2-4.6c1.4 1.4 1.6 2.8 0.4 4c-1.4 1.2-3 1.2-4.6 0.6zM21.6 182.6l5-6.4l0.2 2.4l-3.6 5.4z" fill="#d6d6d6" stroke="none"/>
  <!-- eyedropper -->
  <path d="M19.4 206.2l2 2l-7 7c-0.8 0.6-1.8 0.8-2.8 0.2c-0.4-1-0.2-1.8 0.6-2.6z" stroke-width="1.1"/>
  <path d="M18 204l5.4 5.4l1.2-1.2l-1.2-1.4l2.8-2.6c0.8-1.2 0.8-2.4 0-3.2c-0.8-0.8-2-0.8-3 0l-2.8 2.8l-1.4-1.2z" fill="#d6d6d6" stroke="none"/>
  <!-- pencil -->
  <path d="M22.4 227l3.4 3.4l-11.2 10.4l-4.4 1.2l1.2-4.4zM20.6 228.8l3.4 3.4M11.6 237.6l3 3" stroke-width="1.1"/>
  <!-- stamp -->
  <path d="M12 262.6h13.4v2.8h-13.4zM16.2 262.4c0.6-2 0.4-3.2-0.6-4.400c-1.2-1.6-0.6-4.2 3-4.800c3.6 0.6 4.2 3.2 3 4.800c-1 1.2-1.2 2.4-0.6 4.400z" fill="#d6d6d6" stroke="none"/>
  <path d="M12.8 267.6h11.8" stroke-width="1.2"/>
  <!-- eraser -->
  <path d="M20.6 280.400l5 4.600l-8.8 8h-3.400l-2.4-2.400z" stroke-width="1.1"/>
  <path d="M20.6 280.400l5 4.600l-5.6 5l-5-4.600z" fill="#d6d6d6" stroke="none"/>
  <path d="M16.8 293h9.6" stroke-width="1.1"/>
  <!-- bucket -->
  <path d="M19 309.400l7.2 5.600l-6.6 6l-5.6-6z" stroke-width="1.2"/>
  <path d="M18.2 306.400c2.4 1 3.6 3 3.4 5.8" stroke-width="1"/>
  <path d="M26.4 314.800c1.4 1 2.8 2.4 2.8 3.600c0 1-0.8 1.6-1.6 1.600c-1 0-1.6-0.8-1.6-1.800c0-1.2 0.4-2.2 0.4-3.400z" fill="#d6d6d6" stroke="none"/>
  <!-- pen -->
  <path d="M20.4 359.600l4.2 4.200l-4.6 5.200l-8.6 2.400l2.6-8.400zM11.6 371.200l5-5" stroke-width="1.1"/>
  <circle cx="17.4" cy="365.4" r="1.1" fill="#d6d6d6" stroke="none"/>
  <path d="M21.2 358.800l1.8-1.600l4 4l-1.6 1.800z" fill="#d6d6d6" stroke="none"/>
  <!-- custom shape -->
  <path d="M13.8 410.400c1.2-1 2.4 0.2 3.2 1.400c1.2-0.6 2.6-3.6 4.4-3c1.6 0.6 0.6 2.6 0.6 4c1.4 0.2 4.6-1.4 5 0.600c0.4 2-3 2.2-3.8 3.400c0.6 1.6 1.8 4-0.2 5.200c-2 1-3.2-2-4.8-2.400c-1.6 0.4-3.2 3.4-6 2.600c-2.6-1-1.4-3.6 0.4-5c1.6-1.4 2.6-2.4 2-3.600c-0.4-1-1.8-2.2-0.8-3.200z" fill="#6a696b" stroke-width="1.1"/>
  <!-- zoom -->
  <circle cx="16.2" cy="466.2" r="5.8" stroke-width="1.3"/>
  <path d="M20.6 470.800l5 5" stroke-width="2" stroke-linecap="round"/>
  <path d="M15.6 462.800c1.8-0.2 3.2 0.8 3.8 2.4" stroke-width="0.8"/>
  <!-- quick mask -->
  <rect x="9.4" y="569.4" width="16.4" height="12" stroke-width="1.1"/>
  <circle cx="17.6" cy="575.4" r="3.6" stroke-dasharray="1 1.1" stroke-width="1"/>
  <!-- screen mode -->
  <rect x="9.4" y="599" width="11" height="8.4" stroke-width="1.1"/>
  <rect x="14.4" y="595.8" width="11.2" height="8.4" fill="#535254" stroke-width="1.1"/>
  <path d="M14.4 596.400h11.2" stroke-width="1.8"/>
 </g>
 <!-- eyedropper / bucket checker badge -->
 <g fill="#d0d0d0">
  <path d="M7.4 200.600l1.4-1.200l1 1h1.800l1-1l1.4 1.200v5l-1.6 1.600h-3.400l-1.6-1.600z"/>
  <path d="M7.4 305l1.4-1.200l1 1h1.800l1-1l1.4 1.200v5l-1.6 1.600h-3.400l-1.6-1.600z"/>
 </g>
 <g fill="#2e2d2f">
  <path d="M8.6 201.600h1.200v1.200h-1.200zM11 201.600h1.200v1.200h-1.200zM9.8 202.800h1.200v1.200h-1.200zM12.2 202.800h1.200v1.200h-1.200zM8.6 204h1.200v1.200h-1.200zM11 204h1.200v1.200h-1.200zM9.8 205.200h1.200v1.200h-1.200zM12.2 205.200h1v1.200h-1z"/>
  <path d="M8.6 306h1.200v1.200h-1.200zM11 306h1.200v1.200h-1.200zM9.8 307.200h1.200v1.200h-1.200zM12.2 307.200h1.200v1.200h-1.200zM8.6 308.400h1.200v1.200h-1.200zM11 308.400h1.200v1.200h-1.200zM9.8 309.600h1.200v1.200h-1.200zM12.2 309.600h1v1.200h-1z"/>
 </g>
 <!-- path selection arrow -->
 <path d="M14.6 383.600l9 8.800l-4.6 0.400l2.6 5l-2 1l-2.6-5.200l-2.6 3z" fill="#0f0f0f" stroke="#d9d9d9" stroke-width="1"/>
 <!-- hand -->
 <path d="M14.6 445.800l-4.2-4c-0.6-1.2 0.6-2 1.8-1.400l2.4 1.800v-6c0.2-1.2 1.6-1.2 1.8 0v-1.600c0.2-1.2 1.8-1.2 2 0v0.200c0.2-1.2 1.8-1.2 2 0v1.600c0.2-1.2 1.8-1 1.8 0.200l2.2 1.600c0.8 0 1.4 0.6 1.2 1.600l-1.4 5.600c-0.4 2.4-1.8 4.4-4.6 4.600h-2.200c-1.6-0.2-2.4-0.8-2.8-4.200z" fill="#d6d6d6"/>
 <g stroke="#535254" stroke-width="0.7"><path d="M16.4 436.400v5M18.4 435v6.400M20.4 436v5.6"/></g>
 <!-- more dots -->
 <g fill="#d6d6d6"><circle cx="11.9" cy="494.1" r="2"/><circle cx="18" cy="494.1" r="2"/><circle cx="24.1" cy="494.1" r="2"/></g>
 <!-- T -->
 <path d="M12.8 331.200h12.400v3.600h-1.200l-0.6-1.800h-3.200v10.400l1.8 0.400v1.200h-6v-1.200l1.8-0.400v-10.400h-3.200l-0.6 1.800h-1.200z" fill="#d9d9d9"/>
 <!-- mini default colors / swap -->
 <rect x="6.6" y="516" width="6.2" height="6.8" fill="#e2e2e2"/>
 <rect x="3.3" y="513.2" width="6.2" height="6" fill="#111" stroke="#d8d8d8" stroke-width="0.9"/>
 <g fill="none" stroke="#d6d6d6" stroke-width="1.2"><path d="M23.4 515h5.200v5.4"/></g>
 <path d="M21 515l3.2-2.800v5.600zM28.6 522.400l-2.8-3.200h5.600z" fill="#d6d6d6"/>
 <!-- colour swatches -->
 <rect x="13.8" y="538.4" width="18.6" height="18.6" fill="#fff" stroke="#2c2b2d" stroke-width="0.8"/>
 <rect x="3.9" y="529" width="18.4" height="18.4" fill="#fffef6" stroke="#2c2b2d" stroke-width="0.8"/>
 <rect x="5.2" y="530.3" width="15.8" height="15.8" fill="#a8854e"/>
</svg>

<!-- Bild menu -->
<div class="abs" style="left:151.6px;top:24.6px;width:323px;height:521.5px;background:rgba(0,0,0,.42);filter:blur(0.8px)"></div>
<div class="menu" style="left:149px;top:22px;width:323px;height:521.5px;border:1px solid #9c9c9e;border-top-color:#b5b5b7"></div>
<div class="abs" style="left:152px;top:61px;width:315px;height:24px;background:#0078d7"></div>
<div class="sep" style="left:153px;top:54px;width:315px"></div>
<div class="sep" style="left:153px;top:90px;width:315px"></div>
<div class="sep" style="left:153px;top:174px;width:315px"></div>
<div class="sep" style="left:153px;top:330px;width:315px"></div>
<div class="sep" style="left:153px;top:414px;width:315px"></div>
<div class="sep" style="left:153px;top:474px;width:315px"></div>
<div class="sep" style="left:153px;top:510px;width:315px"></div>
<div class="t" style="left:173.00px;transform-origin:0 0;top:26.98px;font-size:14.5px;color:#000;font-weight:400;transform:scaleX(1.0314);">Modus</div>
<svg class="abs" style="left:455.6px;top:29.7px" width="6" height="10" viewBox="0 0 6 10"><path d="M0.3 0.6 L5.6 5 L0.3 9.4 Z" fill="#000"/></svg>
<div class="t" style="left:173.00px;transform-origin:0 0;top:62.98px;font-size:14.5px;color:#fff;font-weight:400;transform:scaleX(1.0176);">Korrekturen</div>
<svg class="abs" style="left:455.6px;top:65.7px" width="6" height="10" viewBox="0 0 6 10"><path d="M0.3 0.6 L5.6 5 L0.3 9.4 Z" fill="#fff"/></svg>
<div class="t" style="left:173.00px;transform-origin:0 0;top:97.98px;font-size:14.5px;color:#000;font-weight:400;transform:scaleX(1.0503);">Auto-Farbton</div>
<div class="t" style="left:340.57px;transform-origin:100% 0;top:97.98px;font-size:14.5px;color:#000;font-weight:400;transform:scaleX(1.0194);">Umschalt+Strg+L</div>
<div class="t" style="left:173.00px;transform-origin:0 0;top:121.98px;font-size:14.5px;color:#000;font-weight:400;transform:scaleX(1.0511);">Auto-Kontrast</div>
<div class="t" style="left:315.18px;transform-origin:100% 0;top:121.98px;font-size:14.5px;color:#000;font-weight:400;transform:scaleX(1.0420);">Alt+Umschalt+Strg+L</div>
<div class="t" style="left:173.00px;transform-origin:0 0;top:145.98px;font-size:14.5px;color:#000;font-weight:400;transform:scaleX(1.0297);">Auto-Farbe</div>
<div class="t" style="left:338.96px;transform-origin:100% 0;top:145.98px;font-size:14.5px;color:#000;font-weight:400;transform:scaleX(1.0243);">Umschalt+Strg+B</div>
<div class="t" style="left:173.00px;transform-origin:0 0;top:181.98px;font-size:14.5px;color:#000;font-weight:400;transform:scaleX(0.9938);">Bildgröße...</div>
<div class="t" style="left:388.12px;transform-origin:100% 0;top:181.98px;font-size:14.5px;color:#000;font-weight:400;transform:scaleX(1.0731);">Alt+Strg+I</div>
<div class="t" style="left:173.00px;transform-origin:0 0;top:205.98px;font-size:14.5px;color:#000;font-weight:400;transform:scaleX(1.0008);">Arbeitsfläche...</div>
<div class="t" style="left:381.68px;transform-origin:100% 0;top:205.98px;font-size:14.5px;color:#000;font-weight:400;transform:scaleX(1.0448);">Alt+Strg+C</div>
<div class="t" style="left:173.00px;transform-origin:0 0;top:230.98px;font-size:14.5px;color:#000;font-weight:400;transform:scaleX(1.0426);">Bilddrehung</div>
<svg class="abs" style="left:455.6px;top:233.7px" width="6" height="10" viewBox="0 0 6 10"><path d="M0.3 0.6 L5.6 5 L0.3 9.4 Z" fill="#000"/></svg>
<div class="t" style="left:173.00px;transform-origin:0 0;top:253.98px;font-size:14.5px;color:#7f7f81;font-weight:400;transform:scaleX(0.9986);">Freistellen</div>
<div class="t" style="left:173.00px;transform-origin:0 0;top:277.98px;font-size:14.5px;color:#000;font-weight:400;transform:scaleX(0.9661);">Zuschneiden...</div>
<div class="t" style="left:173.00px;transform-origin:0 0;top:301.98px;font-size:14.5px;color:#000;font-weight:400;transform:scaleX(1.0308);">Alles einblenden</div>
<div class="t" style="left:173.00px;transform-origin:0 0;top:337.98px;font-size:14.5px;color:#000;font-weight:400;transform:scaleX(1.0032);">Duplizieren...</div>
<div class="t" style="left:173.00px;transform-origin:0 0;top:361.98px;font-size:14.5px;color:#000;font-weight:400;transform:scaleX(1.0008);">Bildberechnungen...</div>
<div class="t" style="left:173.00px;transform-origin:0 0;top:385.98px;font-size:14.5px;color:#000;font-weight:400;transform:scaleX(0.9880);">Kanalberechnungen...</div>
<div class="t" style="left:173.00px;transform-origin:0 0;top:422.98px;font-size:14.5px;color:#000;font-weight:400;transform:scaleX(1.0431);">Variablen</div>
<svg class="abs" style="left:455.6px;top:425.7px" width="6" height="10" viewBox="0 0 6 10"><path d="M0.3 0.6 L5.6 5 L0.3 9.4 Z" fill="#000"/></svg>
<div class="t" style="left:173.00px;transform-origin:0 0;top:446.98px;font-size:14.5px;color:#7f7f81;font-weight:400;transform:scaleX(0.9924);">Datensatz anwenden...</div>
<div class="t" style="left:173.00px;transform-origin:0 0;top:481.98px;font-size:14.5px;color:#7f7f81;font-weight:400;transform:scaleX(0.9976);">Überfüllen...</div>
<div class="t" style="left:173.00px;transform-origin:0 0;top:518.98px;font-size:14.5px;color:#000;font-weight:400;transform:scaleX(0.9846);">Analyse</div>
<svg class="abs" style="left:455.6px;top:521.7px" width="6" height="10" viewBox="0 0 6 10"><path d="M0.3 0.6 L5.6 5 L0.3 9.4 Z" fill="#000"/></svg>
<!-- Korrekturen submenu -->
<div class="abs" style="left:468.2px;top:61.1px;width:339.4px;height:581px;background:rgba(0,0,0,.42);filter:blur(0.8px)"></div>
<div class="menu" style="left:465.6px;top:58.5px;width:339.4px;height:581px;border:1px solid #9c9c9e;border-top-color:#b5b5b7"></div>
<div class="abs" style="left:467px;top:105px;width:339px;height:33px;background:#0078d7;border:5px solid #ee2f2c;box-sizing:border-box"></div>
<div class="sep" style="left:470px;top:162px;width:331px"></div>
<div class="sep" style="left:470px;top:342px;width:331px"></div>
<div class="sep" style="left:470px;top:474px;width:331px"></div>
<div class="sep" style="left:470px;top:534px;width:331px"></div>
<div class="t" style="left:489.60px;transform-origin:0 0;top:61.98px;font-size:14.5px;color:#000;font-weight:400;transform:scaleX(1.0360);">Helligkeit/Kontrast...</div>
<div class="t" style="left:489.60px;transform-origin:0 0;top:85.98px;font-size:14.5px;color:#000;font-weight:400;transform:scaleX(1.0212);">Tonwertkorrektur...</div>
<div class="t" style="left:742.88px;transform-origin:100% 0;top:85.98px;font-size:14.5px;color:#000;font-weight:400;transform:scaleX(1.0157);">Strg+L</div>
<div class="t" style="left:489.60px;transform-origin:0 0;top:109.98px;font-size:14.5px;color:#fff;font-weight:400;transform:scaleX(0.9807);">Gradationskurven...</div>
<div class="t" style="left:738.86px;transform-origin:100% 0;top:109.98px;font-size:14.5px;color:#fff;font-weight:400;transform:scaleX(1.0500);">Strg+M</div>
<div class="t" style="left:489.60px;transform-origin:0 0;top:133.98px;font-size:14.5px;color:#000;font-weight:400;transform:scaleX(0.9861);">Belichtung...</div>
<div class="t" style="left:489.60px;transform-origin:0 0;top:169.98px;font-size:14.5px;color:#000;font-weight:400;transform:scaleX(0.9766);">Dynamik...</div>
<div class="t" style="left:489.60px;transform-origin:0 0;top:193.98px;font-size:14.5px;color:#000;font-weight:400;transform:scaleX(1.0192);">Farbton/Sättigung...</div>
<div class="t" style="left:740.45px;transform-origin:100% 0;top:193.98px;font-size:14.5px;color:#000;font-weight:400;transform:scaleX(1.0165);">Strg+U</div>
<div class="t" style="left:489.60px;transform-origin:0 0;top:217.98px;font-size:14.5px;color:#000;font-weight:400;transform:scaleX(0.9687);">Farbbalance...</div>
<div class="t" style="left:741.27px;transform-origin:100% 0;top:217.98px;font-size:14.5px;color:#000;font-weight:400;transform:scaleX(1.0149);">Strg+B</div>
<div class="t" style="left:489.60px;transform-origin:0 0;top:241.98px;font-size:14.5px;color:#000;font-weight:400;transform:scaleX(0.9551);">Schwarzweiß...</div>
<div class="t" style="left:646.97px;transform-origin:100% 0;top:241.98px;font-size:14.5px;color:#000;font-weight:400;transform:scaleX(1.0465);">Alt+Umschalt+Strg+B</div>
<div class="t" style="left:489.60px;transform-origin:0 0;top:265.98px;font-size:14.5px;color:#000;font-weight:400;transform:scaleX(1.0280);">Fotofilter...</div>
<div class="t" style="left:489.60px;transform-origin:0 0;top:289.98px;font-size:14.5px;color:#000;font-weight:400;transform:scaleX(0.9877);">Kanalmixer...</div>
<div class="t" style="left:489.60px;transform-origin:0 0;top:313.98px;font-size:14.5px;color:#000;font-weight:400;transform:scaleX(0.9945);">Color Lookup...</div>
<div class="t" style="left:489.60px;transform-origin:0 0;top:349.98px;font-size:14.5px;color:#000;font-weight:400;transform:scaleX(1.0001);">Umkehren</div>
<div class="t" style="left:746.91px;transform-origin:100% 0;top:349.98px;font-size:14.5px;color:#000;font-weight:400;transform:scaleX(1.0385);">Strg+I</div>
<div class="t" style="left:489.60px;transform-origin:0 0;top:373.98px;font-size:14.5px;color:#000;font-weight:400;transform:scaleX(1.0009);">Tontrennung...</div>
<div class="t" style="left:489.60px;transform-origin:0 0;top:397.98px;font-size:14.5px;color:#000;font-weight:400;transform:scaleX(0.9822);">Schwellenwert...</div>
<div class="t" style="left:489.60px;transform-origin:0 0;top:421.98px;font-size:14.5px;color:#000;font-weight:400;transform:scaleX(0.9865);">Verlaufsumsetzung...</div>
<div class="t" style="left:489.60px;transform-origin:0 0;top:445.98px;font-size:14.5px;color:#000;font-weight:400;transform:scaleX(0.9921);">Selektive Farbkorrektur...</div>
<div class="t" style="left:489.60px;transform-origin:0 0;top:481.98px;font-size:14.5px;color:#000;font-weight:400;transform:scaleX(1.0100);">Tiefen/Lichter...</div>
<div class="t" style="left:489.60px;transform-origin:0 0;top:505.98px;font-size:14.5px;color:#000;font-weight:400;transform:scaleX(0.9978);">HDR-Tonung...</div>
<div class="t" style="left:489.60px;transform-origin:0 0;top:541.98px;font-size:14.5px;color:#000;font-weight:400;transform:scaleX(1.0316);">Sättigung verringern</div>
<div class="t" style="left:671.56px;transform-origin:100% 0;top:541.98px;font-size:14.5px;color:#000;font-weight:400;transform:scaleX(1.0268);">Umschalt+Strg+U</div>
<div class="t" style="left:489.60px;transform-origin:0 0;top:565.98px;font-size:14.5px;color:#000;font-weight:400;transform:scaleX(0.9586);">Gleiche Farbe...</div>
<div class="t" style="left:489.60px;transform-origin:0 0;top:589.98px;font-size:14.5px;color:#000;font-weight:400;transform:scaleX(0.9561);">Farbe ersetzen...</div>
<div class="t" style="left:489.60px;transform-origin:0 0;top:613.98px;font-size:14.5px;color:#000;font-weight:400;transform:scaleX(1.0428);">Tonwertangleichung</div>
</body></html>
